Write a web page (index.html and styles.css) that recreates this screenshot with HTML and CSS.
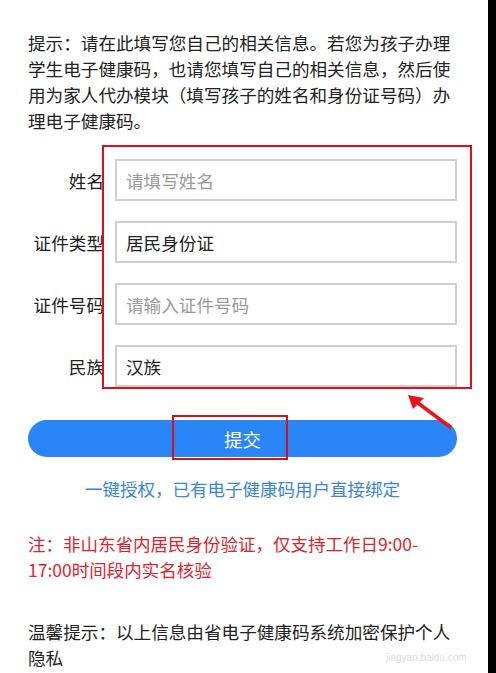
FILE: index.html
```html
<!DOCTYPE html>
<html>
  <head>
    <title>电子健康码</title>
    <meta name="viewport" content="width=device-width, initial-scale=1" />
    <link rel="stylesheet" href="styles.css">
  </head>
  <body>
    <div class="page">
      <p class="tip">提示：请在此填写您自己的相关信息。若您为孩子办理学生电子健康码，也请您填写自己的相关信息，然后使用为家人代办模块（填写孩子的姓名和身份证号码）办理电子健康码。</p>

      <form class="form">
        <div class="row">
          <label for="name">姓名</label>
          <input id="name" type="text" placeholder="请填写姓名" />
        </div>
        <div class="row">
          <label for="idtype">证件类型</label>
          <input id="idtype" type="text" value="居民身份证" />
        </div>
        <div class="row">
          <label for="idno">证件号码</label>
          <input id="idno" type="text" placeholder="请输入证件号码" />
        </div>
        <div class="row">
          <label for="nation">民族</label>
          <input id="nation" type="text" value="汉族" />
        </div>
        <div class="mark-form"></div>
      </form>

      <button class="submit" type="button">提交<span class="mark-btn"></span></button>

      <a class="bind" href="#">一键授权，已有电子健康码用户直接绑定</a>

      <p class="note">注：非山东省内居民身份验证，仅支持工作日9:00-17:00时间段内实名核验</p>

      <p class="warm">温馨提示：以上信息由省电子健康码系统加密保护个人隐私</p>

      <!-- annotation arrow -->
      <svg class="arrow" width="50" height="40" viewBox="0 0 50 40">
        <line x1="46" y1="34" x2="10" y2="7" stroke="#e8141c" stroke-width="3.5" stroke-linecap="round" />
        <polygon points="4,2 20,5 9,16" fill="#e8141c" />
      </svg>

      <div class="watermark">jingyan.baidu.com</div>
    </div>
  </body>
</html>
```

FILE: styles.css
```css
body {
  margin: 0;
  background-color: #000;
  font-family: "Noto Sans CJK SC", "Noto Sans", sans-serif;
  color: #222;
}

.page {
  position: relative;
  width: 488px;
  min-height: 673px;
  box-sizing: border-box;
  padding: 30px 31px 0 28px;
  background-color: #fff;
  overflow: hidden;
}

p {
  margin: 0;
}

.tip {
  font-size: 17.6px;
  line-height: 26px;
}

.form {
  position: relative;
  margin-top: 25px;
  display: flex;
  flex-direction: column;
  gap: 20px;
}

.row {
  display: flex;
  align-items: center;
  gap: 11px;
}

.row label {
  width: 76px;
  text-align: right;
  font-size: 17.6px;
  white-space: nowrap;
}

.row input {
  flex: 1;
  height: 42px;
  box-sizing: border-box;
  border: 2px solid #cfcfcf;
  padding: 0 9px;
  font-family: inherit;
  font-size: 17.6px;
  color: #222;
  outline: none;
}

.row input::placeholder {
  color: #9a9a9a;
}

.mark-form {
  position: absolute;
  left: 74px;
  top: -14px;
  width: 370px;
  height: 244px;
  box-sizing: border-box;
  border: 2.5px solid #e0101a;
  pointer-events: none;
}

.submit {
  position: relative;
  display: block;
  width: 100%;
  height: 37px;
  margin-top: 33px;
  border: none;
  border-radius: 19px;
  background-color: #2a86f6;
  color: #fff;
  font-family: inherit;
  font-size: 18.5px;
  cursor: pointer;
}

.mark-btn {
  position: absolute;
  left: 144px;
  top: -5px;
  width: 116px;
  height: 45px;
  box-sizing: border-box;
  border: 2px solid #d3121c;
}

.bind {
  display: block;
  margin-top: 19px;
  text-align: center;
  font-size: 17.5px;
  line-height: 26px;
  color: #3b86d6;
  text-decoration: none;
}

.note {
  margin-top: 29px;
  font-size: 17.5px;
  line-height: 26px;
  color: #e2222b;
}

.warm {
  margin-top: 36px;
  font-size: 17.6px;
  line-height: 26px;
}

.arrow {
  position: absolute;
  left: 404px;
  top: 393px;
}

.watermark {
  position: absolute;
  left: 386px;
  top: 652px;
  font-family: "Liberation Sans", sans-serif;
  font-size: 10px;
  line-height: 12px;
  color: rgba(180, 180, 180, 0.5);
}
```
